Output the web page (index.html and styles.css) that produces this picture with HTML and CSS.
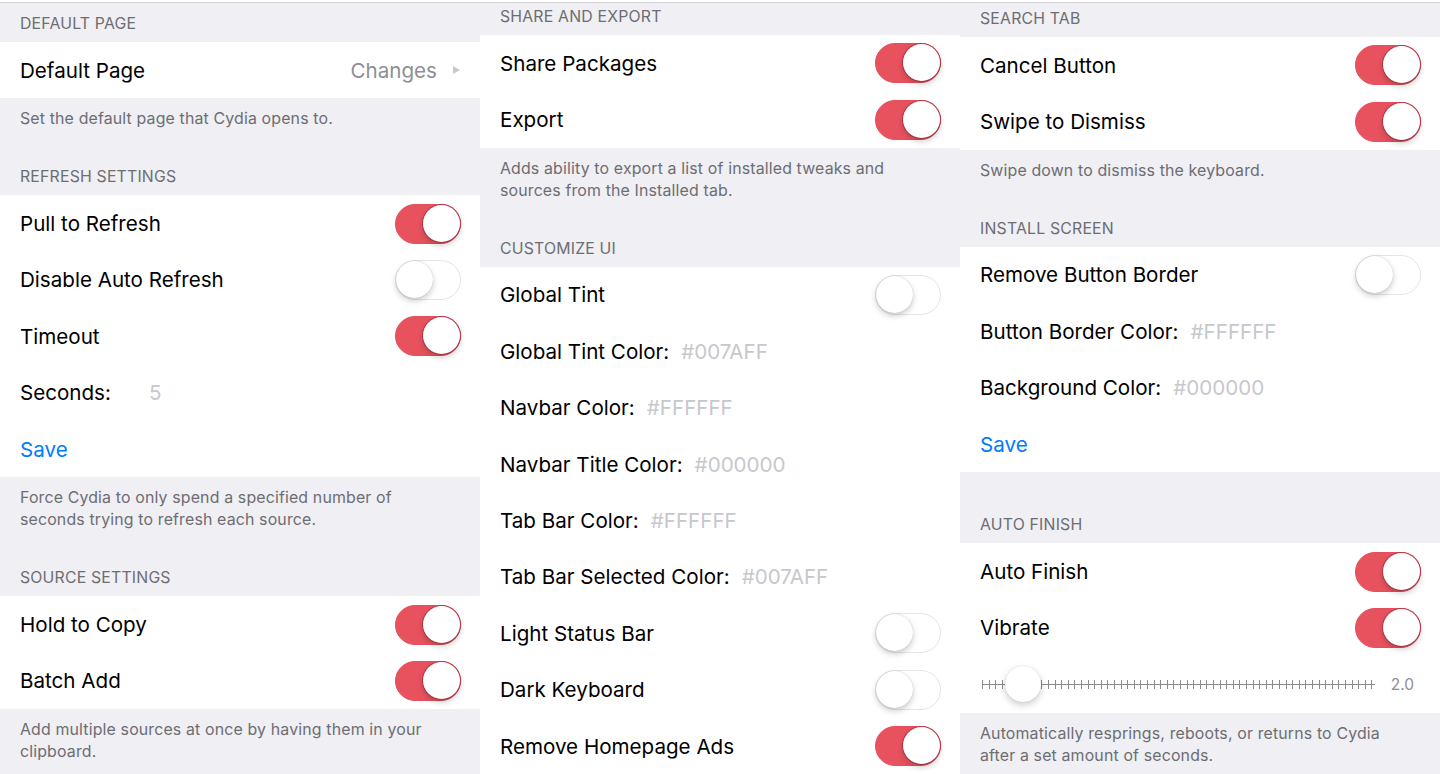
FILE: index.html
```html
<!doctype html>
<html>
<head>
<meta charset="utf-8">
<title>Cydia Settings</title>
  <link rel="stylesheet" href="styles.css">
</head>
<body>
  <div class="screens">
    <!-- first panel -->
    <section class="panel">
      <h3 class="group-title title-a">DEFAULT PAGE</h3>
      <ul class="cells">
        <li class="cell">
          <span class="label">Default Page</span>
          <span class="detail">Changes</span>
          <span class="disclosure"></span>
        </li>
      </ul>
      <p class="group-note">Set the default page that Cydia opens to.</p>

      <h3 class="group-title">REFRESH SETTINGS</h3>
      <ul class="cells">
        <li class="cell"><span class="label">Pull to Refresh</span><span class="switch on"></span></li>
        <li class="cell"><span class="label">Disable Auto Refresh</span><span class="switch"></span></li>
        <li class="cell"><span class="label">Timeout</span><span class="switch on"></span></li>
        <li class="cell"><span class="label">Seconds:</span><span class="value value-wide">5</span></li>
        <li class="cell"><span class="action">Save</span></li>
      </ul>
      <p class="group-note">Force Cydia to only spend a specified number of<br>seconds trying to refresh each source.</p>

      <h3 class="group-title">SOURCE SETTINGS</h3>
      <ul class="cells">
        <li class="cell"><span class="label">Hold to Copy</span><span class="switch on"></span></li>
        <li class="cell"><span class="label">Batch Add</span><span class="switch on"></span></li>
      </ul>
      <p class="group-note">Add multiple sources at once by having them in your<br>clipboard.</p>
    </section>

    <!-- second panel -->
    <section class="panel">
      <h3 class="group-title title-b">SHARE AND EXPORT</h3>
      <ul class="cells">
        <li class="cell"><span class="label">Share Packages</span><span class="switch on"></span></li>
        <li class="cell"><span class="label">Export</span><span class="switch on"></span></li>
      </ul>
      <p class="group-note">Adds ability to export a list of installed tweaks and<br>sources from the Installed tab.</p>

      <h3 class="group-title">CUSTOMIZE UI</h3>
      <ul class="cells">
        <li class="cell"><span class="label">Global Tint</span><span class="switch"></span></li>
        <li class="cell"><span class="label">Global Tint Color:</span><span class="value">#007AFF</span></li>
        <li class="cell"><span class="label">Navbar Color:</span><span class="value">#FFFFFF</span></li>
        <li class="cell"><span class="label">Navbar Title Color:</span><span class="value">#000000</span></li>
        <li class="cell"><span class="label">Tab Bar Color:</span><span class="value">#FFFFFF</span></li>
        <li class="cell"><span class="label">Tab Bar Selected Color:</span><span class="value">#007AFF</span></li>
        <li class="cell"><span class="label">Light Status Bar</span><span class="switch"></span></li>
        <li class="cell"><span class="label">Dark Keyboard</span><span class="switch"></span></li>
        <li class="cell"><span class="label">Remove Homepage Ads</span><span class="switch on"></span></li>
      </ul>
    </section>

    <!-- third panel -->
    <section class="panel">
      <h3 class="group-title title-c">SEARCH TAB</h3>
      <ul class="cells">
        <li class="cell"><span class="label">Cancel Button</span><span class="switch on"></span></li>
        <li class="cell"><span class="label">Swipe to Dismiss</span><span class="switch on"></span></li>
      </ul>
      <p class="group-note">Swipe down to dismiss the keyboard.</p>

      <h3 class="group-title">INSTALL SCREEN</h3>
      <ul class="cells">
        <li class="cell"><span class="label">Remove Button Border</span><span class="switch"></span></li>
        <li class="cell"><span class="label">Button Border Color:</span><span class="value">#FFFFFF</span></li>
        <li class="cell"><span class="label">Background Color:</span><span class="value">#000000</span></li>
        <li class="cell"><span class="action">Save</span></li>
      </ul>
      <div class="group-gap"></div>

      <h3 class="group-title">AUTO FINISH</h3>
      <ul class="cells">
        <li class="cell"><span class="label">Auto Finish</span><span class="switch on"></span></li>
        <li class="cell"><span class="label">Vibrate</span><span class="switch on"></span></li>
        <li class="cell cell-slider">
          <span class="slider"><span class="thumb"></span></span>
          <span class="slider-value">2.0</span>
        </li>
      </ul>
      <p class="group-note">Automatically resprings, reboots, or returns to Cydia<br>after a set amount of seconds.</p>
    </section>
  </div>
</body>
</html>
```

FILE: styles.css
```css
body {
  margin: 0;
  padding-top: 2px;
  background: #fff;
  font-family: Inter, 'Open Sans', Arial, sans-serif;
  color: #000;
}

.screens {
  display: grid;
  grid-template-columns: repeat(3, 480px);
  height: 771px;
  border-top: 1px solid #d3d3d8;
  overflow: hidden;
}

.panel {
  background: #efeff4;
  overflow: hidden;
}

.group-title {
  margin: 0;
  padding: 15px 20px 8px;
  font-size: 15.8px;
  line-height: 20px;
  font-weight: 400;
  color: #6d6d72;
  letter-spacing: .2px;
}
.title-a { padding-top: 11px; }
.title-b { padding-top: 4px; }
.title-c { padding-top: 6px; }

.group-note {
  margin: 0;
  padding: 10px 20px 22px;
  font-size: 15.9px;
  line-height: 22px;
  color: #6d6d72;
  letter-spacing: .15px;
}

.group-gap {
  height: 28px;
}

.cells {
  list-style-type: none;
  margin: 0;
  padding: 0;
  background: #fff;
}

.cell {
  display: flex;
  align-items: center;
  height: 56.4px;
  padding: 0 19px 0 20px;
  font-size: 20.6px;
}

.label {
  color: #000;
}

.detail {
  margin-left: auto;
  color: #8e8e93;
}

.disclosure {
  width: 0;
  height: 0;
  margin: 0 1px 0 16px;
  border-top: 4.5px solid transparent;
  border-bottom: 4.5px solid transparent;
  border-left: 7px solid #c7c7cc;
}

.value {
  margin-left: 12px;
  color: #c7c7cc;
}
.value-wide {
  margin-left: 38px;
}

.action {
  color: #007aff;
}

.switch {
  position: relative;
  margin-left: auto;
  width: 66px;
  height: 40px;
  box-sizing: border-box;
  border-radius: 20px;
  border: 1.5px solid #e5e5ea;
  background: #fff;
}
.switch::after {
  content: '';
  position: absolute;
  top: 0;
  left: 0;
  width: 37px;
  height: 37px;
  border-radius: 50%;
  background: #fff;
  box-shadow: 0 3px 6px rgba(0, 0, 0, .2), 0 0 1px rgba(0, 0, 0, .25);
}
.switch.on {
  border-color: #e24f5d;
  background: #e8525f;
}
.switch.on::after {
  left: auto;
  right: 0;
  box-shadow: 0 3px 6px rgba(0, 0, 0, .22), 0 0 0 1px #c33b4a;
}

.cell-slider {
  padding-left: 22px;
  padding-right: 26px;
}

.slider {
  position: relative;
  flex: 1;
  height: 9px;
  background:
    linear-gradient(#8a8a8e, #8a8a8e) 0 50% / 100% 1px no-repeat,
    repeating-linear-gradient(90deg, #8a8a8e 0, #8a8a8e 1px, transparent 1px, transparent 6.6px);
}

.thumb {
  position: absolute;
  left: 23px;
  top: -14px;
  width: 36px;
  height: 36px;
  border-radius: 50%;
  background: #fff;
  box-shadow: 0 3px 7px rgba(0, 0, 0, .2), 0 0 1px rgba(0, 0, 0, .2);
}

.slider-value {
  margin-left: 16px;
  font-size: 15.5px;
  color: #8e8e93;
}
```
